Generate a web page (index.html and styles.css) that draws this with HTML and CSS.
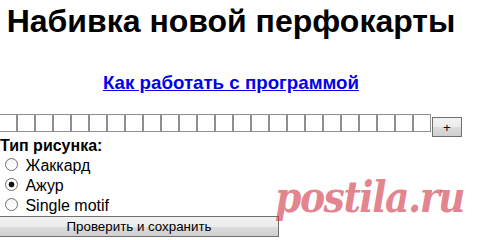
FILE: index.html
```html
<!DOCTYPE html>
<html lang="ru">
<head>
    <meta charset="UTF-8">
    <meta name="viewport" content="width=device-width, initial-scale=1.0">
    <title>Набивка новой перфокарты</title>
    <link rel="stylesheet" href="styles.css">
</head>
<body>
    <div class="page">
        <h1 class="title">Набивка новой перфокарты</h1>
        <h3 class="help"><a href="#">Как работать с программой</a></h3>

        <div class="card-row">
            <div class="cells">
                <span class="cell"></span><span class="cell"></span><span class="cell"></span><span class="cell"></span>
                <span class="cell"></span><span class="cell"></span><span class="cell"></span><span class="cell"></span>
                <span class="cell"></span><span class="cell"></span><span class="cell"></span><span class="cell"></span>
                <span class="cell"></span><span class="cell"></span><span class="cell"></span><span class="cell"></span>
                <span class="cell"></span><span class="cell"></span><span class="cell"></span><span class="cell"></span>
                <span class="cell"></span><span class="cell"></span><span class="cell"></span><span class="cell"></span>
            </div>
            <button class="btn add-btn">+</button>
        </div>

        <div class="pattern">
            <div class="pattern-label">Тип рисунка:</div>
            <label class="option"><input type="radio" name="type"> Жаккард</label>
            <label class="option"><input type="radio" name="type" checked> Ажур</label>
            <label class="option"><input type="radio" name="type"> Single motif</label>
        </div>

        <button class="btn save-btn">Проверить и сохранить</button>
    </div>

    <div class="watermark">postila.ru</div>
</body>
</html>
```

FILE: styles.css
```css
body {
    margin: 0;
    font-family: "Liberation Sans", Arial, sans-serif;
    font-size: 16px;
    color: #000;
    background: #fff;
    overflow: hidden;
}
.page {
    width: 462px;
}
.title {
    font-size: 32px;
    line-height: 37px;
    margin: 3px 0 0;
    text-align: center;
}
.help {
    font-size: 18.72px;
    line-height: 22px;
    margin: 32px 0 0;
    text-align: center;
}
.help a {
    color: #0000ee;
}
.card-row {
    display: flex;
    align-items: flex-start;
    margin: 20px 0 0 -1px;
}
.cells {
    display: flex;
}
.cell {
    width: 16px;
    height: 16px;
    border: 1px solid #8f8f8f;
    background: #fff;
}
.btn {
    font-family: "Liberation Sans", Arial, sans-serif;
    font-size: 13.33px;
    color: #000;
    border: 1px solid #707070;
    background: linear-gradient(#f2f2f2, #ebebeb 50%, #dddddd 50%, #cfcfcf);
    padding: 0;
    border-radius: 0;
}
.add-btn {
    width: 32px;
    height: 20px;
    margin: 3px 0 0 1px;
}
.pattern-label {
    font-weight: bold;
    line-height: 18.4px;
}
.option {
    display: block;
}
.option input {
    appearance: none;
    width: 13px;
    height: 13px;
    margin: 3px 3px 0 5px;
    border: 1px solid #6f6f6f;
    border-radius: 50%;
    background: linear-gradient(#f4f4f4, #ffffff);
    box-sizing: border-box;
}
.option input:checked {
    background: radial-gradient(circle, #111 0 2.6px, #fff 3.2px);
}
.save-btn {
    display: block;
    width: 280px;
    height: 21px;
    margin: 1px 0 0 -1px;
}
.watermark {
    position: absolute;
    left: 275px;
    top: 177px;
    font-family: "DejaVu Serif Condensed", "DejaVu Serif", serif;
    font-style: italic;
    font-weight: bold;
    font-size: 42px;
    line-height: 42px;
    color: rgba(208, 48, 68, 0.6);
    letter-spacing: -1.5px;
}
```
